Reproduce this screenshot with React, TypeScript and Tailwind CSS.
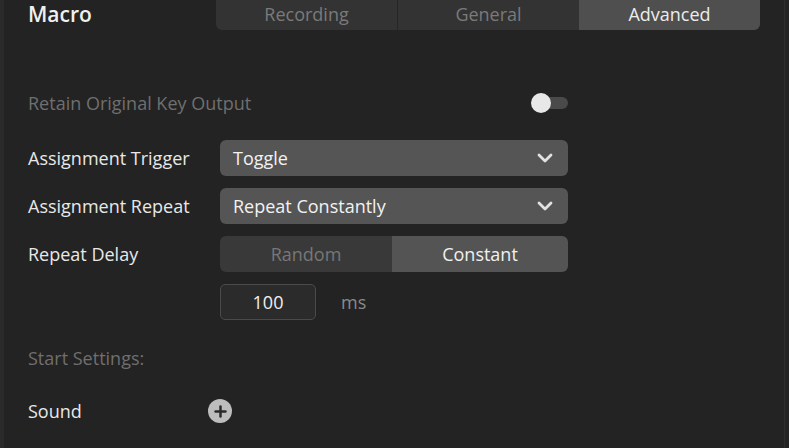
import { ChevronDown, Plus } from "lucide-react";

function Select({ value }: { value: string }) {
  return (
    <div className="flex h-[36px] w-[348px] items-center justify-between rounded-[6px] bg-[#555555] pl-[13px] pr-[11px] text-[18px] font-medium text-[#f2f2f2]">
      <span>{value}</span>
      <ChevronDown size={24} strokeWidth={2.8} className="text-[#e2e2e2]" />
    </div>
  );
}

export default function App() {
  return (
    <div
      className="flex h-[448px] w-[789px] bg-[#232323] leading-[24px] text-[#e8e8e8]"
      style={{ fontFamily: '"Open Sans", "Liberation Sans", sans-serif' }}
    >
      <div className="w-[4px] bg-[#2a2a2a]" />
      <div className="flex flex-1 flex-col">
        <div className="flex h-[30px] items-start">
          <div className="w-[212px] pl-[24px] text-[21px] font-semibold leading-[28px] text-[#f0f0f0]">Macro</div>
          <div className="flex h-[30px] w-[544px] overflow-hidden rounded-b-[6px] bg-[#333333] text-[18px]">
            <div className="flex flex-1 items-center justify-center pb-[2px] text-[#7a7a7a]">Recording</div>
            <div className="w-[1px] bg-[#262626]" />
            <div className="flex flex-1 items-center justify-center pb-[2px] text-[#7a7a7a]">General</div>
            <div className="flex flex-1 items-center justify-center bg-[#4f4f4f] pb-[2px] text-[#ececec]">Advanced</div>
          </div>
        </div>

        <div className="mt-[63px] flex h-[20px] w-[564px] items-center justify-between pl-[24px]">
          <span className="text-[18px] text-[#6f6f6f]">Retain Original Key Output</span>
          <div className="relative h-[20px] w-[37px]">
            <div className="absolute right-0 top-[4px] h-[12px] w-[26px] rounded-full bg-[#4a4a4a]" />
            <div className="absolute left-0 top-0 h-[20px] w-[20px] rounded-full bg-[#e8e8e8]" />
          </div>
        </div>

        <div className="mt-[27px] flex flex-col gap-[12px] pl-[24px]">
          <div className="flex items-center">
            <span className="w-[192px] text-[18px] font-medium">Assignment Trigger</span>
            <Select value="Toggle" />
          </div>
          <div className="flex items-center">
            <span className="w-[192px] text-[18px] font-medium">Assignment Repeat</span>
            <Select value="Repeat Constantly" />
          </div>
          <div className="flex items-center">
            <span className="w-[192px] text-[18px] font-medium">Repeat Delay</span>
            <div className="flex h-[36px] w-[348px] overflow-hidden rounded-[6px] text-[18px]">
              <div className="flex w-[172px] items-center justify-center bg-[#393939] text-[#777777]">Random</div>
              <div className="flex flex-1 items-center justify-center bg-[#545454] font-medium text-[#f0f0f0]">Constant</div>
            </div>
          </div>
          <div className="flex items-center">
            <div className="ml-[192px] flex h-[36px] w-[96px] items-center justify-center rounded-[5px] border border-[#4a4a4a] bg-[#2b2b2b] text-[18px] font-medium text-[#f0f0f0]">
              100
            </div>
            <span className="ml-[25px] text-[18px] text-[#8a8a8a]">ms</span>
          </div>
        </div>

        <div className="mt-[26px] pl-[24px] text-[18px] text-[#6f6f6f]">Start Settings:</div>

        <div className="mt-[29px] flex h-[24px] items-center pl-[24px]">
          <span className="w-[180px] text-[18px] font-medium">Sound</span>
          <div className="flex h-[24px] w-[24px] items-center justify-center rounded-full bg-[#bdbdbd]">
            <Plus size={17} strokeWidth={3.5} className="text-[#2a2a2a]" />
          </div>
        </div>
      </div>
      <div className="w-[1px] bg-[#2e2e2e]" />
      <div className="w-[4px] bg-[#232323]" />
    </div>
  );
}
